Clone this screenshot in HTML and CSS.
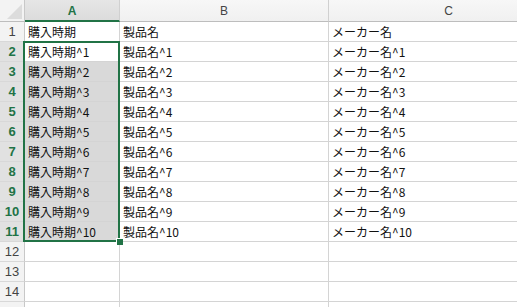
FILE: index.html
```html
<!DOCTYPE html>
<html>
<head>
<meta charset="utf-8">
<link rel="stylesheet" href="styles.css">
</head>
<body>
<div class="sheet">
  <div class="grid">
    <div class="corner"><span class="tri"></span></div>
    <div class="colhead sel">A</div>
    <div class="colhead">B</div>
    <div class="colhead">C</div>

    <div class="rowhead">1</div><div class="cell">購入時期</div><div class="cell">製品名</div><div class="cell">メーカー名</div>
    <div class="rowhead sel">2</div><div class="cell">購入時期^1</div><div class="cell">製品名^1</div><div class="cell">メーカー名^1</div>
    <div class="rowhead sel">3</div><div class="cell hl">購入時期^2</div><div class="cell">製品名^2</div><div class="cell">メーカー名^2</div>
    <div class="rowhead sel">4</div><div class="cell hl">購入時期^3</div><div class="cell">製品名^3</div><div class="cell">メーカー名^3</div>
    <div class="rowhead sel">5</div><div class="cell hl">購入時期^4</div><div class="cell">製品名^4</div><div class="cell">メーカー名^4</div>
    <div class="rowhead sel">6</div><div class="cell hl">購入時期^5</div><div class="cell">製品名^5</div><div class="cell">メーカー名^5</div>
    <div class="rowhead sel">7</div><div class="cell hl">購入時期^6</div><div class="cell">製品名^6</div><div class="cell">メーカー名^6</div>
    <div class="rowhead sel">8</div><div class="cell hl">購入時期^7</div><div class="cell">製品名^7</div><div class="cell">メーカー名^7</div>
    <div class="rowhead sel">9</div><div class="cell hl">購入時期^8</div><div class="cell">製品名^8</div><div class="cell">メーカー名^8</div>
    <div class="rowhead sel">10</div><div class="cell hl">購入時期^9</div><div class="cell">製品名^9</div><div class="cell">メーカー名^9</div>
    <div class="rowhead sel">11</div><div class="cell hl">購入時期^10</div><div class="cell">製品名^10</div><div class="cell">メーカー名^10</div>
    <div class="rowhead">12</div><div class="cell"></div><div class="cell"></div><div class="cell"></div>
    <div class="rowhead">13</div><div class="cell"></div><div class="cell"></div><div class="cell"></div>
    <div class="rowhead">14</div><div class="cell"></div><div class="cell"></div><div class="cell"></div>
    <div class="rowhead"></div><div class="cell"></div><div class="cell"></div><div class="cell"></div>
  </div>
  <div class="selection"><span class="handle"></span></div>
</div>
</body>
</html>
```

FILE: styles.css
```css
html, body {
  margin: 0;
  padding: 0;
  background: #fff;
  overflow: hidden;
}
.sheet {
  position: relative;
  width: 517px;
  height: 307px;
  overflow: hidden;
}
.grid {
  display: grid;
  grid-template-columns: 25px 95px 209px 240px;
  grid-template-rows: 22px repeat(15, 20px);
  font-family: "Noto Sans CJK JP", "Liberation Sans", sans-serif;
  font-size: 12px;
}
.corner {
  position: relative;
  background: #f3f3f3;
  border-right: 1px solid #c8c8c8;
  border-bottom: 1px solid #bdbdbd;
}
.tri {
  position: absolute;
  right: 2px;
  bottom: 2px;
  width: 0;
  height: 0;
  border-left: 15px solid transparent;
  border-bottom: 15px solid #dcdcdc;
}
.colhead {
  background: linear-gradient(#f7f7f7, #f0f0f0);
  border-right: 1px solid #d0d0d0;
  border-bottom: 1px solid #bdbdbd;
  color: #444;
  font-family: "Liberation Sans", sans-serif;
  font-size: 12px;
  display: flex;
  align-items: center;
  justify-content: center;
  padding-top: 1px;
}
.colhead.sel {
  background: linear-gradient(#e6e6e6, #dcdcdc);
  color: #217346;
  font-weight: bold;
  border-bottom: 2px solid #217346;
}
.rowhead {
  background: #f3f3f3;
  border-right: 1px solid #c8c8c8;
  border-bottom: 1px solid #d8d8d8;
  color: #444;
  font-family: "Liberation Sans", sans-serif;
  font-size: 13px;
  display: flex;
  align-items: center;
  justify-content: center;
}
.rowhead.sel {
  background: #e1e1e1;
  color: #217346;
  font-weight: bold;
}
.cell {
  border-right: 1px solid #d4d4d4;
  border-bottom: 1px solid #d4d4d4;
  color: #111;
  padding-left: 3px;
  display: flex;
  align-items: center;
  white-space: nowrap;
  overflow: hidden;
  line-height: 1;
}
.cell.hl {
  background: #d9d9d9;
}
.selection {
  position: absolute;
  left: 23px;
  top: 41px;
  width: 97px;
  height: 201px;
  box-sizing: border-box;
  border: 2px solid #217346;
}
.handle {
  position: absolute;
  right: -5px;
  bottom: -5px;
  width: 6px;
  height: 6px;
  background: #217346;
  border: 1px solid #fff;
  border-right: none;
  border-bottom: none;
}
```
